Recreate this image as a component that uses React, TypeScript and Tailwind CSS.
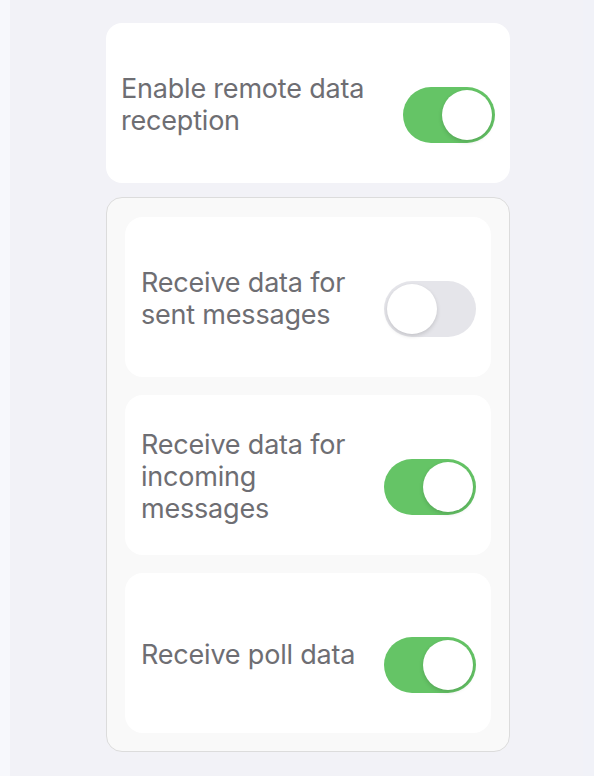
import React, { useState } from 'react';

const Toggle: React.FC<{ on: boolean; onChange: () => void }> = ({ on, onChange }) => (
  <button
    onClick={onChange}
    className={`relative block shrink-0 w-[92px] h-[56px] rounded-full transition-colors ${on ? 'bg-[#65c466]' : 'bg-[#e5e5ea]'}`}
  >
    <span
      className={`absolute top-[3px] w-[50px] h-[50px] rounded-full bg-white shadow-[0_2px_4px_rgba(0,0,0,0.15)] transition-all ${on ? 'left-[39px]' : 'left-[3px]'}`}
    />
  </button>
);

const Row: React.FC<{ label: string; on: boolean; onChange: () => void; inner?: boolean }> = ({ label, on, onChange, inner }) => (
  <div className={`bg-white flex items-center justify-between h-[160px] ${inner ? 'rounded-[18px] pl-4 pr-[15px]' : 'rounded-[16px] pl-[15px] pr-[15px]'}`}>
    <span className={`pt-1 text-[27px] leading-[32px] tracking-[-0.2px] text-[#6e6e73] ${inner ? 'max-w-[230px]' : 'max-w-[262px]'}`}>{label}</span>
    <div className="flex mt-6">
      <Toggle on={on} onChange={onChange} />
    </div>
  </div>
);

const App: React.FC = () => {
  const [remote, setRemote] = useState(true);
  const [sent, setSent] = useState(false);
  const [incoming, setIncoming] = useState(true);
  const [poll, setPoll] = useState(true);

  return (
    <div className="min-h-screen flex bg-[#f2f2f7]" style={{ fontFamily: 'Inter, "Noto Sans", sans-serif' }}>
      <div className="w-[10px] bg-[#f7f8fc]" />
      <main className="flex-1 pl-[96px] pt-[23px]">
        <div className="w-[404px] flex flex-col gap-[14px]">
          <Row label="Enable remote data reception" on={remote} onChange={() => setRemote(!remote)} />

          <div className="bg-[#f9f9f9] border border-[#dcdcdc] rounded-[16px] px-[18px] pt-[19px] pb-[18px] flex flex-col gap-[18px]">
            <Row inner label="Receive data for sent messages" on={sent} onChange={() => setSent(!sent)} />
            <Row inner label="Receive data for incoming messages" on={incoming} onChange={() => setIncoming(!incoming)} />
            <Row inner label="Receive poll data" on={poll} onChange={() => setPoll(!poll)} />
          </div>
        </div>
      </main>
      <div className="w-[11px] bg-[#f1f2f8]" />
    </div>
  );
};

export default App;
